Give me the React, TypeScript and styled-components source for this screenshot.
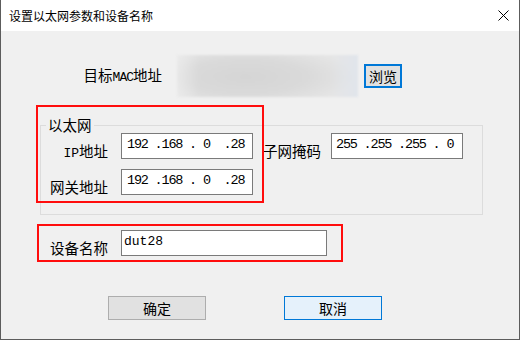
import React from 'react'
import styled, { createGlobalStyle } from 'styled-components'

const GlobalStyle = createGlobalStyle`
  html, body {
    margin: 0;
    padding: 0;
    background: #ffffff;
  }
  * {
    box-sizing: border-box;
  }
`

const CJK = `"Noto Sans CJK SC", "Noto Sans", sans-serif`
const MONO = `"Liberation Mono", "DejaVu Sans Mono", monospace`

const StyledWindow = styled.div`
  position: relative;
  display: flex;
  flex-direction: column;
  width: 520px;
  height: 340px;
  border: 1px solid #5c5c5c;
  border-top: none;
  background: #f0f0f0;
  font-family: ${CJK};
  color: #000;
`
const StyledTitleBar = styled.div`
  display: flex;
  align-items: center;
  justify-content: space-between;
  height: 31px;
  padding: 0 10px 0 8px;
  background: #ffffff;
  font-size: 12px;
`
const StyledBody = styled.div`
  display: flex;
  flex-direction: column;
  flex: 1;
`
const StyledMacRow = styled.div`
  display: flex;
  align-items: center;
  height: 42px;
  margin-top: 24px;
`
const StyledMacLabel = styled.div`
  width: 161px;
  text-align: right;
  font-size: 14.5px;
  line-height: 18px;
`
const StyledLatin = styled.span<{ $tight?: boolean }>`
  font-family: ${MONO};
  font-size: 13px;
  letter-spacing: ${({ $tight }) => ($tight ? '-1px' : '0')};
`
const StyledBlur = styled.div`
  width: 181px;
  height: 42px;
  margin-left: 15px;
  background: linear-gradient(90deg, rgba(240, 240, 240, 0.6) 0%, rgba(240, 240, 240, 0) 12%, rgba(240, 240, 240, 0) 85%, rgba(224, 229, 236, 0.9) 100%),
    radial-gradient(ellipse 62% 75% at 38% 52%, #d5d5d5 0%, #dadada 55%, #e6e6e6 100%);
  filter: blur(1px);
`
const StyledButton = styled.button<{ $focused?: boolean; $thick?: boolean }>`
  display: flex;
  align-items: center;
  justify-content: center;
  padding: 0;
  width: ${({ $thick }) => ($thick ? '38px' : '98px')};
  height: 24px;
  margin-left: ${({ $thick }) => ($thick ? '6px' : '0')};
  border: ${({ $focused, $thick }) =>
    $thick ? '2px solid #0078d7' : $focused ? '1px solid #0078d7' : '1px solid #adadad'};
  background: ${({ $focused, $thick }) => ($focused && !$thick ? '#e5f1fb' : '#e1e1e1')};
  font-family: ${CJK};
  font-size: 14px;
  line-height: 18px;
  color: #000;
`
const StyledGroup = styled.fieldset`
  width: 443px;
  margin: 20px 0 0 39px;
  padding: 0 0 19px 0;
  border: 1px solid #dcdcdc;
`
const StyledLegend = styled.legend`
  margin-left: 5px;
  padding: 0 2px;
  font-size: 14.5px;
  line-height: 16px;
`
const StyledGrid = styled.div`
  display: grid;
  grid-template-columns: 80px 132px 78px 132px;
  grid-auto-rows: 26px;
  row-gap: 10px;
`
const StyledFieldLabel = styled.div<{ $left?: boolean }>`
  padding: 10px ${({ $left }) => ($left ? '0 0 10px' : '13px 0 0')};
  text-align: ${({ $left }) => ($left ? 'left' : 'right')};
  font-size: 14.5px;
  line-height: 16px;
  white-space: nowrap;
`
const StyledInput = styled.div<{ $pad?: number; $ip?: boolean }>`
  height: 26px;
  padding: 3px 0 0 ${({ $pad }) => $pad ?? 5}px;
  border: 1px solid #7a7a7a;
  background: #ffffff;
  font-family: ${MONO};
  font-size: ${({ $ip }) => ($ip ? '13.5px' : '13px')};
  letter-spacing: ${({ $ip }) => ($ip ? '-1.2px' : '0')};
  line-height: 15px;
  white-space: pre;
`
const StyledDeviceRow = styled.div`
  display: grid;
  grid-template-columns: 80px 206px;
  grid-auto-rows: 26px;
  margin: 15px 0 0 40px;
`
const StyledButtonRow = styled.div`
  display: flex;
  gap: 78px;
  margin-top: 40px;
  padding-left: 107px;
`
const StyledMark = styled.div<{ $left: number; $top: number; $w: number; $h: number }>`
  position: absolute;
  left: ${({ $left }) => $left}px;
  top: ${({ $top }) => $top}px;
  width: ${({ $w }) => $w}px;
  height: ${({ $h }) => $h}px;
  border: 2px solid #ff0d0d;
  pointer-events: none;
`

function CloseIcon() {
  return (
    <svg width="11" height="11" viewBox="0 0 11 11">
      <path d="M0.5 0.5 L10.5 10.5 M10.5 0.5 L0.5 10.5" stroke="#000" strokeWidth="1" fill="none" />
    </svg>
  )
}

export default function App() {
  return (
    <>
      <GlobalStyle />
      <StyledWindow>
        <StyledTitleBar>
          <span>设置以太网参数和设备名称</span>
          <CloseIcon />
        </StyledTitleBar>
        <StyledBody>
          <StyledMacRow>
            <StyledMacLabel>
              目标<StyledLatin $tight>MAC</StyledLatin>地址
            </StyledMacLabel>
            <StyledBlur />
            <StyledButton $thick>浏览</StyledButton>
          </StyledMacRow>
          <StyledGroup>
            <StyledLegend>以太网</StyledLegend>
            <StyledGrid>
              <StyledFieldLabel>
                <StyledLatin>IP</StyledLatin>地址
              </StyledFieldLabel>
              <StyledInput $ip>{'192 .168 . 0  .28'}</StyledInput>
              <StyledFieldLabel $left>子网掩码</StyledFieldLabel>
              <StyledInput $ip $pad={4}>{'255 .255 .255 . 0'}</StyledInput>
              <StyledFieldLabel>网关地址</StyledFieldLabel>
              <StyledInput $ip>{'192 .168 . 0  .28'}</StyledInput>
            </StyledGrid>
          </StyledGroup>
          <StyledDeviceRow>
            <StyledFieldLabel>设备名称</StyledFieldLabel>
            <StyledInput $pad={2}>dut28</StyledInput>
          </StyledDeviceRow>
          <StyledButtonRow>
            <StyledButton>确定</StyledButton>
            <StyledButton $focused>取消</StyledButton>
          </StyledButtonRow>
        </StyledBody>
        <StyledMark $left={35} $top={105} $w={228} $h={98} />
        <StyledMark $left={36} $top={224} $w={306} $h={38} />
      </StyledWindow>
    </>
  )
}
